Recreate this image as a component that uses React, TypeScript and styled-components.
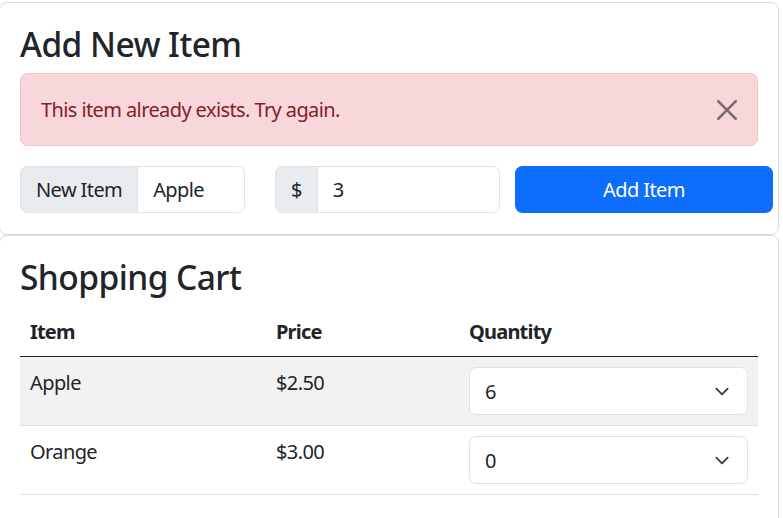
import React from "react";
import styled, { createGlobalStyle } from "styled-components";

const GlobalStyle = createGlobalStyle`
  html, body {
    margin: 0;
    padding: 0;
    background: #ffffff;
  }
  body {
    font-family: "Noto Sans", "Open Sans", "Liberation Sans", sans-serif;
    font-size: 20px;
    line-height: 30px;
    letter-spacing: -0.6px;
    color: #212529;
    overflow: hidden;
  }
  * { box-sizing: border-box; }
`;

const Page = styled.div`
  width: 780px;
  margin-left: -1px;
  padding-top: 2px;
  display: flex;
  flex-direction: column;
`;

const Card = styled.section`
  background: #ffffff;
  border: 1px solid #d9d9d9;
  border-radius: 7.5px;
  padding: 20px 20px 21px;
`;

const Title = styled.h2`
  margin: 0 0 10px;
  padding-top: 1px;
  height: 40px;
  font-size: 33.5px;
  line-height: 40px;
  font-weight: 500;
  letter-spacing: -0.55px;
  color: #212529;
`;

const Alert = styled.div`
  display: flex;
  align-items: center;
  justify-content: space-between;
  height: 73px;
  background: #f8d7da;
  border: 1px solid #f5c2c7;
  border-radius: 7.5px;
  color: #842029;
  padding: 0 20px;
  margin-bottom: 20px;
`;

const CloseButton = styled.button`
  display: flex;
  align-items: center;
  justify-content: center;
  width: 20px;
  height: 20px;
  padding: 0;
  background: transparent;
  border: none;
  cursor: pointer;
`;

const FormRow = styled.div`
  display: flex;
  margin-right: -15px;
`;

const Group = styled.div<{ $after: number }>`
  display: flex;
  width: 225px;
  height: 47px;
  margin-right: ${(p) => p.$after}px;
`;

const Addon = styled.span`
  display: flex;
  align-items: center;
  padding: 1px 15px 0;
  background: #e9ecef;
  border: 1px solid #dee2e6;
  border-radius: 7.5px 0 0 7.5px;
  color: #212529;
  white-space: nowrap;
`;

const TextInput = styled.input`
  flex: 1;
  min-width: 0;
  margin-left: -1px;
  padding: 1px 15px 0;
  border: 1px solid #dee2e6;
  border-radius: 0 7.5px 7.5px 0;
  font: inherit;
  letter-spacing: inherit;
  color: #212529;
  background: #ffffff;
  outline: none;
`;

const PrimaryButton = styled.button`
  flex: 1;
  height: 47px;
  padding-top: 1px;
  background: #0d6efd;
  color: #ffffff;
  border: none;
  border-radius: 7.5px;
  font: inherit;
  letter-spacing: inherit;
  cursor: pointer;
`;

const Table = styled.table`
  width: 100%;
  margin-bottom: 20px;
  border-collapse: collapse;
  table-layout: fixed;
`;

const Th = styled.th<{ $width: number }>`
  width: ${(p) => p.$width}px;
  text-align: left;
  font-weight: 700;
  letter-spacing: -0.8px;
  padding: 11px 10px 9px;
  border-bottom: 1px solid #212529;
  vertical-align: top;
`;

const Row = styled.tr<{ $striped: boolean }>`
  background: ${(p) => (p.$striped ? "#f2f2f2" : "#ffffff")};
`;

const Td = styled.td`
  padding: 10px;
  border-bottom: 1px solid #dee2e6;
  vertical-align: top;
`;

const CellText = styled.div`
  padding-top: 1px;
`;

const SelectWrap = styled.div`
  position: relative;
  width: 100%;
`;

const Select = styled.select`
  appearance: none;
  -webkit-appearance: none;
  display: block;
  width: 100%;
  height: 48px;
  padding: 1px 50px 0 15px;
  border: 1px solid #dee2e6;
  border-radius: 7.5px;
  background: #ffffff;
  font: inherit;
  letter-spacing: inherit;
  color: #212529;
  outline: none;
`;

const Chevron = styled.svg`
  position: absolute;
  right: 16px;
  top: 17px;
  width: 20px;
  height: 15px;
  pointer-events: none;
`;

const items = [
  { name: "Apple", price: "$2.50", qty: 6 },
  { name: "Orange", price: "$3.00", qty: 0 },
];

const QuantitySelect: React.FC<{ value: number }> = ({ value }) => (
  <SelectWrap>
    <Select defaultValue={String(value)}>
      {Array.from({ length: 11 }, (_, i) => (
        <option key={i} value={String(i)}>
          {i}
        </option>
      ))}
    </Select>
    <Chevron viewBox="0 0 16 16" aria-hidden="true">
      <path
        d="M2 5l6 6 6-6"
        fill="none"
        stroke="#343a40"
        strokeWidth="2"
        strokeLinecap="round"
        strokeLinejoin="round"
      />
    </Chevron>
  </SelectWrap>
);

export default function App() {
  return (
    <>
      <GlobalStyle />
      <Page>
        <Card>
          <Title>Add New Item</Title>
          <Alert role="alert">
            <span>This item already exists. Try again.</span>
            <CloseButton aria-label="Close">
              <svg width="20" height="20" viewBox="0 0 16 16" aria-hidden="true">
                <path
                  d="M.293.293a1 1 0 0 1 1.414 0L8 6.586 14.293.293a1 1 0 1 1 1.414 1.414L9.414 8l6.293 6.293a1 1 0 0 1-1.414 1.414L8 9.414l-6.293 6.293a1 1 0 0 1-1.414-1.414L6.586 8 .293 1.707a1 1 0 0 1 0-1.414z"
                  fill="#000"
                  fillOpacity="0.5"
                />
              </svg>
            </CloseButton>
          </Alert>
          <FormRow>
            <Group $after={30}>
              <Addon>New Item</Addon>
              <TextInput defaultValue="Apple" />
            </Group>
            <Group $after={15}>
              <Addon>$</Addon>
              <TextInput defaultValue="3" />
            </Group>
            <PrimaryButton>Add Item</PrimaryButton>
          </FormRow>
        </Card>
        <Card>
          <Title>Shopping Cart</Title>
          <Table>
            <thead>
              <tr>
                <Th $width={246}>Item</Th>
                <Th $width={193}>Price</Th>
                <Th $width={299}>Quantity</Th>
              </tr>
            </thead>
            <tbody>
              {items.map((it, i) => (
                <Row key={it.name} $striped={i % 2 === 0}>
                  <Td>
                    <CellText>{it.name}</CellText>
                  </Td>
                  <Td>
                    <CellText>{it.price}</CellText>
                  </Td>
                  <Td>
                    <QuantitySelect value={it.qty} />
                  </Td>
                </Row>
              ))}
            </tbody>
          </Table>
        </Card>
      </Page>
    </>
  );
}
